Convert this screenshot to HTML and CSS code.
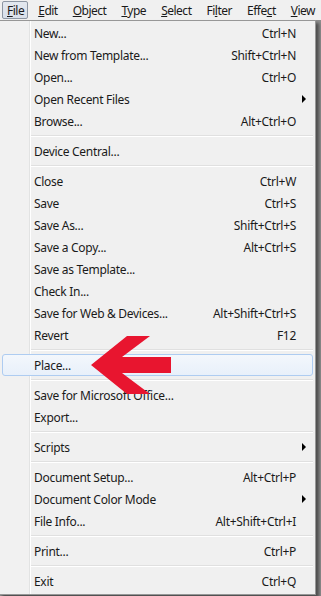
FILE: index.html
```html
<!DOCTYPE html>
<html>
<head>
<meta charset="utf-8">
<link rel="stylesheet" href="styles.css">
</head>
<body>
<div class="menubar">
  <span class="mb-item active"><u>F</u>ile</span>
  <span class="mb-item"><u>E</u>dit</span>
  <span class="mb-item"><u>O</u>bject</span>
  <span class="mb-item"><u>T</u>ype</span>
  <span class="mb-item"><u>S</u>elect</span>
  <span class="mb-item">Fi<u>l</u>ter</span>
  <span class="mb-item">Effe<u>c</u>t</span>
  <span class="mb-item"><u>V</u>iew</span>
</div>
<div class="menu">
  <div class="row"><span class="label">New...</span><span class="key">Ctrl+N</span><span class="sub"></span></div>
  <div class="row"><span class="label">New from Template...</span><span class="key">Shift+Ctrl+N</span><span class="sub"></span></div>
  <div class="row"><span class="label">Open...</span><span class="key">Ctrl+O</span><span class="sub"></span></div>
  <div class="row"><span class="label">Open Recent Files</span><span class="key"></span><span class="sub arrow"></span></div>
  <div class="row"><span class="label">Browse...</span><span class="key">Alt+Ctrl+O</span><span class="sub"></span></div>
  <div class="sep"></div>
  <div class="row"><span class="label">Device Central...</span><span class="key"></span><span class="sub"></span></div>
  <div class="sep"></div>
  <div class="row"><span class="label">Close</span><span class="key">Ctrl+W</span><span class="sub"></span></div>
  <div class="row"><span class="label">Save</span><span class="key">Ctrl+S</span><span class="sub"></span></div>
  <div class="row"><span class="label">Save As...</span><span class="key">Shift+Ctrl+S</span><span class="sub"></span></div>
  <div class="row"><span class="label">Save a Copy...</span><span class="key">Alt+Ctrl+S</span><span class="sub"></span></div>
  <div class="row"><span class="label">Save as Template...</span><span class="key"></span><span class="sub"></span></div>
  <div class="row"><span class="label">Check In...</span><span class="key"></span><span class="sub"></span></div>
  <div class="row"><span class="label">Save for Web &amp; Devices...</span><span class="key">Alt+Shift+Ctrl+S</span><span class="sub"></span></div>
  <div class="row"><span class="label">Revert</span><span class="key">F12</span><span class="sub"></span></div>
  <div class="sep"></div>
  <div class="row hover"><span class="label">Place...</span><span class="key"></span><span class="sub"></span></div>
  <div class="sep"></div>
  <div class="row"><span class="label">Save for Microsoft Office...</span><span class="key"></span><span class="sub"></span></div>
  <div class="row"><span class="label">Export...</span><span class="key"></span><span class="sub"></span></div>
  <div class="sep"></div>
  <div class="row"><span class="label">Scripts</span><span class="key"></span><span class="sub arrow"></span></div>
  <div class="sep"></div>
  <div class="row"><span class="label">Document Setup...</span><span class="key">Alt+Ctrl+P</span><span class="sub"></span></div>
  <div class="row"><span class="label">Document Color Mode</span><span class="key"></span><span class="sub arrow"></span></div>
  <div class="row"><span class="label">File Info...</span><span class="key">Alt+Shift+Ctrl+I</span><span class="sub"></span></div>
  <div class="sep"></div>
  <div class="row"><span class="label">Print...</span><span class="key">Ctrl+P</span><span class="sub"></span></div>
  <div class="sep"></div>
  <div class="row"><span class="label">Exit</span><span class="key">Ctrl+Q</span><span class="sub"></span></div>
</div>
<svg class="pointer" width="90" height="64" viewBox="88 334 90 64" xmlns="http://www.w3.org/2000/svg">
  <polygon points="91,365 127,336 150,336 122,357 171,357 171,373 122,373 150,394 127,394" fill="#e8152f"/>
</svg>
</body>
</html>
```

FILE: styles.css
```css
html, body {
  margin: 0;
  padding: 0;
}
body {
  width: 321px;
  height: 596px;
  overflow: hidden;
  background: #8e8e8e;
  font-family: "Noto Sans", "Open Sans", sans-serif;
  font-size: 12px;
  letter-spacing: -0.3px;
  color: #1a1a1a;
  position: relative;
}
u {
  text-decoration: underline;
  text-underline-offset: 1px;
}
.menubar {
  height: 20px;
  background: #f0f0f0;
  display: flex;
  align-items: center;
  padding-left: 2px;
  box-sizing: border-box;
  white-space: nowrap;
  overflow: hidden;
  letter-spacing: -0.5px;
}
.mb-item {
  height: 18px;
  line-height: 17px;
  padding: 0 4px 0 4px;
  margin-right: 5px;
  box-sizing: border-box;
  border: 1px solid transparent;
}
.mb-item.active {
  padding: 0 3px 0 4px;
  margin-right: 5px;
  border-color: #8d96a3;
  border-radius: 2px;
  background: linear-gradient(#e3e8ef, #d9e0ea);
}
.menu {
  width: 317px;
  margin-left: -1px;
  box-sizing: border-box;
  border: 1px solid #979797;
  padding: 1px 1px 2px 1px;
  background: linear-gradient(to right, #f1f1f1 29px, #e2e3e3 29px, #e2e3e3 30px, #ffffff 30px, #ffffff 31px, #f0f0f0 31px);
  box-shadow: 3px 3px 3px rgba(0, 0, 0, 0.45);
}
.row {
  height: 22px;
  display: grid;
  grid-template-columns: 1fr auto 16px;
  align-items: center;
  padding-left: 31px;
  box-sizing: border-box;
  border: 1px solid transparent;
  border-radius: 3px;
  margin: 0 1px;
  white-space: nowrap;
}
.row.hover {
  border-color: #aeccf1;
  background: linear-gradient(#f3f7fc, #e8f0fa);
}
.key {
  text-align: right;
}
.sub.arrow {
  width: 0;
  height: 0;
  border-top: 4px solid transparent;
  border-bottom: 4px solid transparent;
  border-left: 4px solid #000;
  margin-left: 6px;
}
.sep {
  height: 8px;
  margin-left: 30px;
  margin-right: 1px;
  display: flex;
  flex-direction: column;
  justify-content: center;
}
.sep::before {
  content: "";
  display: block;
  height: 1px;
  background: #e0e0e0;
  border-bottom: 1px solid #ffffff;
}
.pointer {
  position: absolute;
  left: 88px;
  top: 334px;
}
```
